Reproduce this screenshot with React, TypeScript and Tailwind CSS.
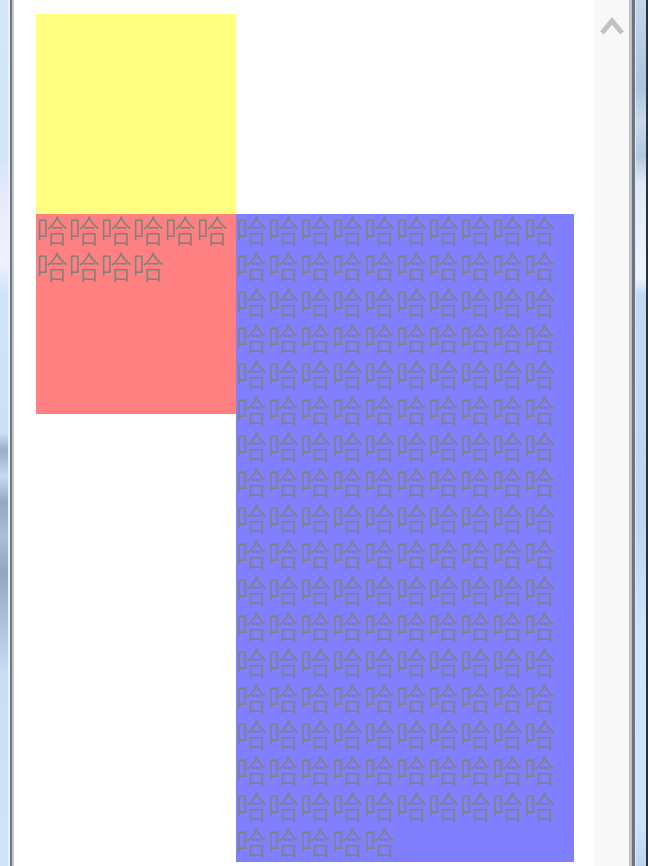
import { type FunctionComponent } from 'react'

const HA = '哈'

const WindowEdgeLeft: FunctionComponent = () => {
  return (
    <div className="flex h-full shrink-0 flex-row">
      <div className="h-full w-[8px] bg-[linear-gradient(180deg,#d4e6f8_0%,#d2e4f8_18%,#e6e8fb_22%,#f1f1fd_30%,#cfe4f9_34%,#c9e0f7_50%,#98aec6_52%,#c4daf1_55%,#93a9c2_58%,#a9bfd6_62%,#91a7bf_66%,#c8def5_78%,#cde4fb_100%)]" />
      <div className="h-full w-[2px] bg-[#e9f1fb]" />
      <div className="h-full w-[2px] bg-[#6c7787]" />
      <div className="h-full w-[2px] bg-[#c6c6c6]" />
    </div>
  )
}

const WindowEdgeRight: FunctionComponent = () => {
  return (
    <div className="flex h-full shrink-0 flex-row">
      <div className="h-full w-[3px] bg-[#c2c2c2]" />
      <div className="h-full w-[3px] bg-[#6b7684]" />
      <div className="h-full w-[1px] bg-[#dfe9f4]" />
      <div className="h-full w-[10px] bg-[linear-gradient(180deg,#c4d6ea_0%,#aec4dc_10%,#c8d9ec_14%,#b3c8de_18%,#dde9f6_21%,#eef5fd_32%,#c0daf3_34%,#bcd6ef_60%,#cfe5fb_75%,#cde3fa_95%,#bcd5ee_100%)]" />
      <div className="h-full w-[2px] bg-[#2a3038]" />
    </div>
  )
}

const ScrollBar: FunctionComponent = () => {
  return (
    <div className="flex h-full w-[34px] shrink-0 flex-col items-center bg-[#f8f8f8] pt-[17px]">
      <svg width="24" height="19" viewBox="0 0 24 19" fill="none">
        <polyline
          points="2,16 12,4 22,16"
          stroke="#c2c2c2"
          strokeWidth="5"
          strokeLinejoin="miter"
          fill="none"
        />
      </svg>
    </div>
  )
}

const App: FunctionComponent = () => {
  const redText = HA.repeat(10)
  const blueText = HA.repeat(175)

  return (
    <div className="flex h-[866px] w-[648px] flex-row overflow-hidden bg-white">
      <WindowEdgeLeft />

      {/* page content */}
      <div className="flex h-full flex-1 flex-col pl-[22px] pt-[14px] font-['Noto_Sans_CJK_SC',sans-serif] text-[32px] font-light leading-[36px] text-[#808080]">
        <div className="h-[200px] w-[200px] shrink-0 bg-[#ffff80]" />
        <div className="flex flex-row items-start">
          <div className="h-[200px] w-[200px] shrink-0 bg-[#ff8080] break-all">
            <span className="relative -top-[3px]">{redText}</span>
          </div>
          <div className="h-[648px] w-[338px] shrink-0 bg-[#8080ff] break-all">
            <span className="relative -top-[3px]">{blueText}</span>
          </div>
        </div>
      </div>

      <ScrollBar />
      <WindowEdgeRight />
    </div>
  )
}

export default App
